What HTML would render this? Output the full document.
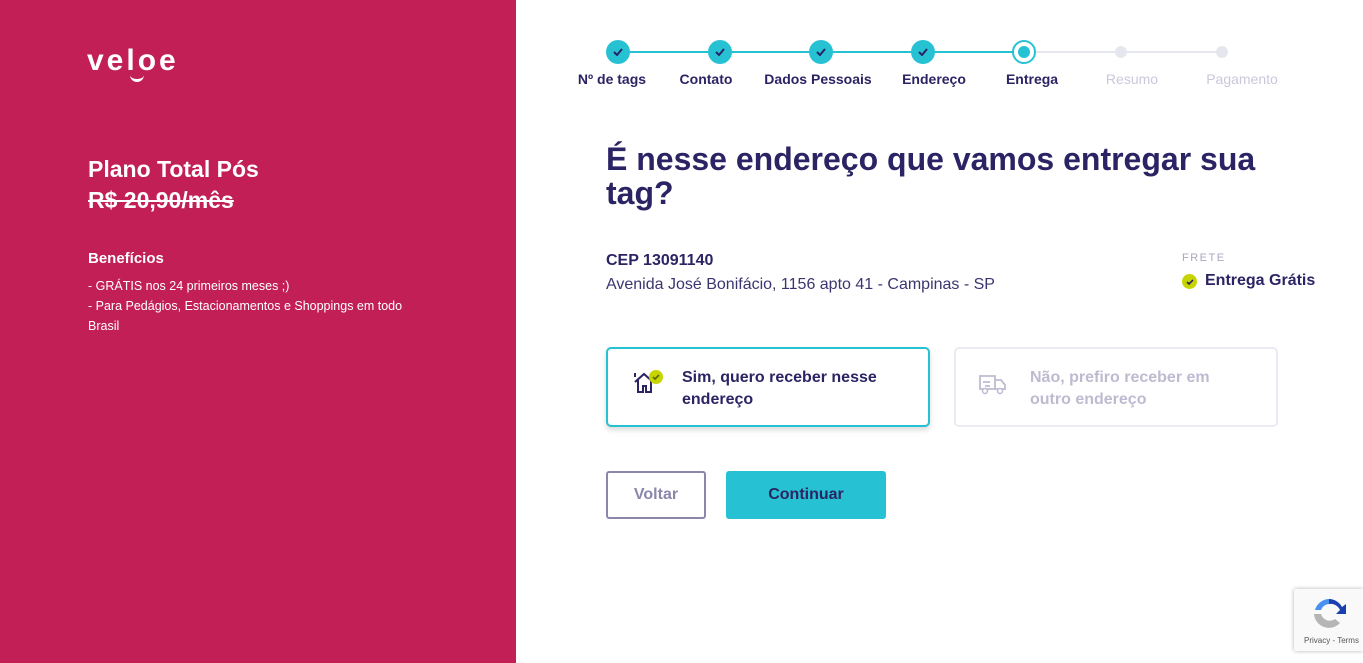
<!DOCTYPE html>
<html><head><meta charset="utf-8"><style>
*{margin:0;padding:0;box-sizing:border-box}
body{width:1363px;height:663px;overflow:hidden;font-family:"Liberation Sans",sans-serif;background:#fff;position:relative;color:#2b2464}
.left{position:absolute;left:0;top:0;width:516px;height:663px;background:#c21f56;color:#fff}
.abs{position:absolute;white-space:nowrap}
.line{position:absolute;top:51px;height:2px}
.dot{position:absolute;width:24px;height:24px;border-radius:50%;background:#26c2d3;top:40px;display:flex;align-items:center;justify-content:center}
.lbl{position:absolute;top:71px;font-size:14px;font-weight:bold;transform:translateX(-50%);white-space:nowrap}
.card{position:absolute;top:347px;height:80px;border-radius:5px;background:#fff}
.btn{position:absolute;top:471px;height:48px;border-radius:3px;font-weight:bold;font-size:16px;display:flex;align-items:center;justify-content:center}
</style></head><body>
<div class="left">
 <div class="abs" style="left:87px;top:44px;font-size:30px;font-weight:bold;letter-spacing:3px">veloe</div>
 <div class="abs" style="left:130px;top:74px;width:14px;height:8px;border-bottom:3px solid #fff;border-radius:0 0 8px 8px"></div>
 <div class="abs" style="left:88px;top:156px;font-size:23px;font-weight:bold">Plano Total Pós</div>
 <div class="abs" style="left:88px;top:187px;font-size:23px;font-weight:bold;text-decoration:line-through">R$ 20,90/mês</div>
 <div class="abs" style="left:88px;top:250px;font-size:15px;font-weight:bold">Benefícios</div>
 <div class="abs" style="left:88px;top:276px;font-size:12.5px;line-height:20px">- GRÁTIS nos 24 primeiros meses ;)<br>- Para Pedágios, Estacionamentos e Shoppings em todo<br>Brasil</div>
</div>

<div class="line" style="left:618px;width:406px;background:#26c2d3"></div>
<div class="line" style="left:1024px;width:198px;background:#e6e6ee"></div>
<div class="dot" style="left:606px"><svg width="10" height="8"><path d="M1 4l3 3 5-6" stroke="#2b2464" stroke-width="2" fill="none"/></svg></div>
<div class="dot" style="left:708px"><svg width="10" height="8"><path d="M1 4l3 3 5-6" stroke="#2b2464" stroke-width="2" fill="none"/></svg></div>
<div class="dot" style="left:809px"><svg width="10" height="8"><path d="M1 4l3 3 5-6" stroke="#2b2464" stroke-width="2" fill="none"/></svg></div>
<div class="dot" style="left:911px"><svg width="10" height="8"><path d="M1 4l3 3 5-6" stroke="#2b2464" stroke-width="2" fill="none"/></svg></div>
<div class="dot" style="left:1012px;background:#fff;border:2px solid #26c2d3"><div style="width:12px;height:12px;border-radius:50%;background:#26c2d3"></div></div>
<div class="dot" style="left:1115px;top:46px;width:12px;height:12px;background:#e6e6ee"></div>
<div class="dot" style="left:1216px;top:46px;width:12px;height:12px;background:#e6e6ee"></div>
<div class="lbl" style="left:612px">Nº de tags</div>
<div class="lbl" style="left:706px">Contato</div>
<div class="lbl" style="left:818px">Dados Pessoais</div>
<div class="lbl" style="left:934px">Endereço</div>
<div class="lbl" style="left:1032px">Entrega</div>
<div class="lbl" style="left:1132px;color:#c9c8dc;font-weight:normal">Resumo</div>
<div class="lbl" style="left:1242px;color:#c9c8dc;font-weight:normal">Pagamento</div>

<div class="abs" style="left:606px;top:142px;font-size:32px;font-weight:bold;line-height:34px;white-space:normal;width:690px">É nesse endereço que vamos entregar sua tag?</div>
<div class="abs" style="left:606px;top:252px;font-size:16px;font-weight:bold">CEP 13091140</div>
<div class="abs" style="left:606px;top:276px;font-size:16px;color:#3b3570">Avenida José Bonifácio, 1156 apto 41 - Campinas - SP</div>
<div class="abs" style="left:1182px;top:252px;font-size:11px;letter-spacing:1.5px;color:#aaa8c0">FRETE</div>
<div class="abs" style="left:1182px;top:274px;width:15px;height:15px;border-radius:50%;background:#c8d400;display:flex;align-items:center;justify-content:center"><svg width="8" height="6"><path d="M1 3l2 2 4-4" stroke="#2b2464" stroke-width="1.6" fill="none"/></svg></div>
<div class="abs" style="left:1205px;top:272px;font-size:16px;font-weight:bold">Entrega Grátis</div>

<div class="card" style="left:606px;width:324px;border:2px solid #26c2d3;box-shadow:0 3px 6px rgba(0,0,0,.15)">
 <svg class="abs" style="left:24px;top:20px" width="36" height="28"><path d="M3 13L12 5l9 8M6 11v12h5v-6h3v6h5V11M3 8l0-4" stroke="#2b2464" stroke-width="2" fill="none"/><circle cx="24" cy="8" r="7" fill="#c8d400"/><path d="M21 8l2 2 4-4" stroke="#5a6a00" stroke-width="1.6" fill="none"/></svg>
 <div class="abs" style="left:74px;top:18px;font-size:16px;font-weight:bold;line-height:22px">Sim, quero receber nesse<br>endereço</div>
</div>
<div class="card" style="left:954px;width:324px;border:2px solid #eceaf2">
 <svg class="abs" style="left:22px;top:24px" width="30" height="22"><path d="M2 3h15v13H2zM17 7h6l4 5v4h-10M5 9h7M7 13h5" stroke="#bdbbd0" stroke-width="1.8" fill="none"/><circle cx="7" cy="18" r="2.5" fill="#fff" stroke="#bdbbd0" stroke-width="1.5"/><circle cx="22" cy="18" r="2.5" fill="#fff" stroke="#bdbbd0" stroke-width="1.5"/></svg>
 <div class="abs" style="left:74px;top:18px;font-size:16px;font-weight:bold;line-height:22px;color:#bdbbd0">Não, prefiro receber em<br>outro endereço</div>
</div>

<div class="btn" style="left:606px;width:100px;border:2px solid #8a86ac;color:#8a86ac">Voltar</div>
<div class="btn" style="left:726px;width:160px;background:#26c2d3;color:#2b2464">Continuar</div>

<div class="abs" style="left:1294px;top:589px;width:69px;height:62px;background:#f9f9f9;box-shadow:0 0 4px rgba(0,0,0,.3);border-radius:2px">
 <svg class="abs" style="left:17px;top:7px" width="36" height="36"><path d="M18 3a15 15 0 0 1 13 8l4-3v10H25l4-4a10 10 0 0 0-11-6z" fill="#1a3fb0"/><path d="M18 3a15 15 0 0 0-14 11h6a9 9 0 0 1 8-6z" fill="#4a90f0"/><path d="M3 18a15 15 0 0 0 26 9l-5-4a9 9 0 0 1-14-5z" fill="#b5b5b5"/></svg>
 <div class="abs" style="left:10px;top:47px;font-size:8px;color:#555">Privacy - Terms</div>
</div>
</body></html>
